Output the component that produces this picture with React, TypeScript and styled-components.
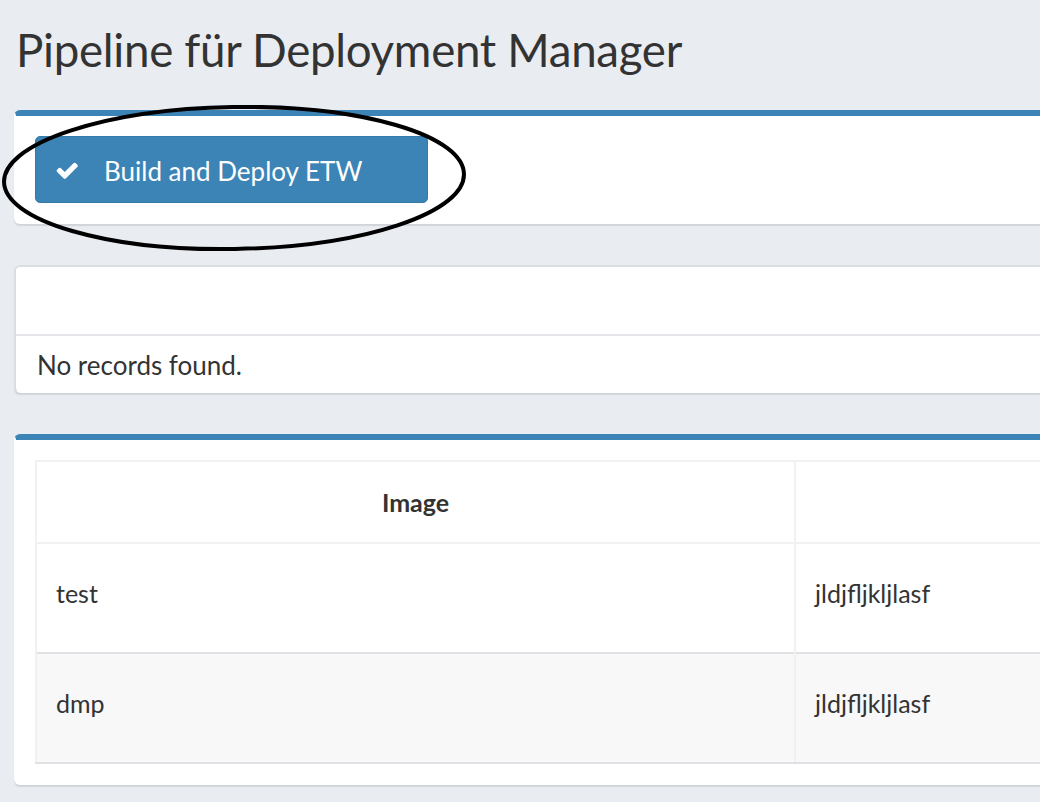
import React from 'react';
import styled, { createGlobalStyle } from 'styled-components';

const GlobalStyle = createGlobalStyle`
  html, body {
    margin: 0;
    padding: 0;
    overflow: hidden;
    background: #e9edf2;
  }
  body {
    font-family: Lato, "Open Sans", sans-serif;
    color: #333;
  }
`;

const Page = styled.div`
  width: 1200px;
  padding: 22px 0 0 14px;
`;

const Title = styled.h1`
  margin: 0 0 32px 2px;
  font-size: 45.7px;
  font-weight: 400;
  line-height: 56px;
  color: #333;
  letter-spacing: -0.3px;
`;

const Box = styled.section<{ $accent?: boolean }>`
  position: relative;
  background: #fff;
  border-top: ${(p) => (p.$accent ? '6px solid #3c84b6' : '2px solid #dadde2')};
  border-left: 2px solid ${(p) => (p.$accent ? '#fff' : '#dadde2')};
  border-radius: 6px 0 0 6px;
  box-shadow: 0 2px 1px rgba(0, 0, 0, 0.1);
  margin-bottom: 41px;
`;

const BoxBody = styled.div`
  padding: 20px 19px 21px;
`;

const BoxHeader = styled.div`
  height: 67px;
  border-bottom: 2px solid #e4e6e9;
`;

const Empty = styled.div`
  padding: 0 21px;
  height: 57px;
  display: flex;
  align-items: center;
  font-size: 26px;
`;

const Button = styled.button`
  display: flex;
  align-items: center;
  gap: 26px;
  width: 393px;
  height: 67px;
  padding: 3px 0 0 20px;
  background: #3c84b6;
  border: 1px solid #357aa9;
  border-radius: 5px;
  color: #fff;
  font-family: Lato, "Open Sans", sans-serif;
  font-size: 26px;
  cursor: pointer;
`;

const Annotation = styled.svg`
  position: absolute;
  left: -14px;
  top: -11px;
  pointer-events: none;
`;

const Table = styled.table`
  width: 100%;
  border-collapse: collapse;
  font-size: 25px;
`;

const Th = styled.th<{ $width?: number }>`
  height: 80px;
  padding: 0;
  border: 2px solid #f1f1f1;
  font-weight: 700;
  text-align: center;
  width: ${(p) => (p.$width ? `${p.$width}px` : 'auto')};
`;

const Row = styled.tr<{ $striped?: boolean }>`
  background: ${(p) => (p.$striped ? '#f8f8f8' : '#fff')};
  &:last-child td {
    border-bottom: 2px solid #dfe1e4;
  }
`;

const Td = styled.td<{ $first?: boolean }>`
  height: 98px;
  padding: 0 19px 10px;
  border-left: 2px solid #f1f1f1;
  border-right: 2px solid #f1f1f1;
  border-top: 2px solid ${(p) => (p.$first ? '#f1f1f1' : '#dfe1e4')};
`;

const Check = () => (
  <svg width="22" height="18" viewBox="80 440 1600 1000" fill="#fff">
    <path d="M1671 566q0 40-28 68l-724 724-136 136q-28 28-68 28t-68-28l-136-136-362-362q-28-28-28-68t28-68l136-136q28-28 68-28t68 28l294 295 656-657q28-28 68-28t68 28l136 136q28 28 28 68z" />
  </svg>
);

const rows = [
  { image: 'test', tag: 'jldjfljkljlasf' },
  { image: 'dmp', tag: 'jldjfljkljlasf' },
];

export default function App() {
  return (
    <>
      <GlobalStyle />
      <Page>
        <Title>Pipeline für Deployment Manager</Title>

        <Box $accent>
          <BoxBody>
            <Button>
              <Check />
              Build and Deploy ETW
            </Button>
          </BoxBody>
          <Annotation width="480" height="150" viewBox="0 0 480 150">
            <ellipse cx="232" cy="73" rx="230" ry="71" fill="none" stroke="#000" strokeWidth="4" transform="rotate(-1 232 73)" />
          </Annotation>
        </Box>

        <Box>
          <BoxHeader />
          <Empty>No records found.</Empty>
        </Box>

        <Box $accent>
          <BoxBody>
            <Table>
              <thead>
                <tr>
                  <Th $width={757}>Image</Th>
                  <Th />
                </tr>
              </thead>
              <tbody>
                {rows.map((r, i) => (
                  <Row key={r.image} $striped={i % 2 === 1}>
                    <Td $first={i === 0}>{r.image}</Td>
                    <Td $first={i === 0}>{r.tag}</Td>
                  </Row>
                ))}
              </tbody>
            </Table>
          </BoxBody>
        </Box>
      </Page>
    </>
  );
}
